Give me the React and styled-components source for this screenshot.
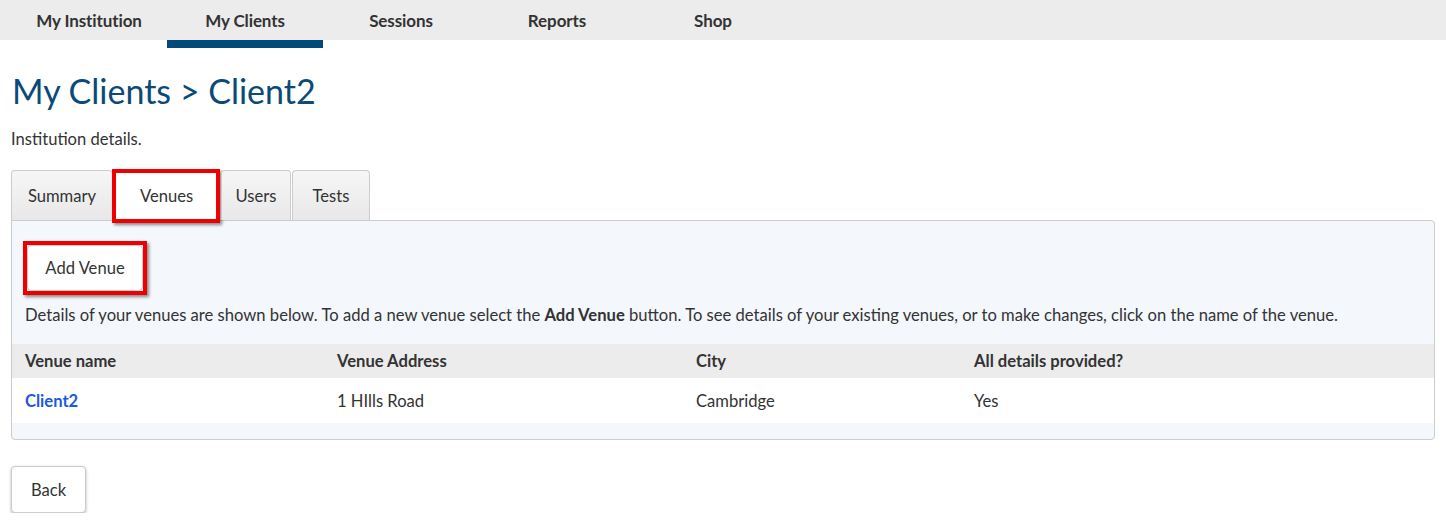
import React from 'react'
import styled, { createGlobalStyle } from 'styled-components'

const GlobalStyle = createGlobalStyle`
  body {
    margin: 0;
    font-family: Lato, "Open Sans", Arial, sans-serif;
    color: #333;
    background: #fff;
  }
`

const NavBar = styled.nav`
  display: flex;
  height: 40px;
  padding-left: 11px;
  background: #ececec;
`

const NavItem = styled.a`
  position: relative;
  width: 156px;
  display: flex;
  align-items: center;
  justify-content: center;
  font-size: 17px;
  font-weight: 700;
  letter-spacing: -0.1px;
  color: #333;
  text-decoration: none;

  ${p => p.$active && `
    &::after {
      content: '';
      position: absolute;
      left: 0;
      right: 0;
      top: 40px;
      height: 8px;
      background: #004b7a;
    }
  `}
`

const Main = styled.main`
  padding: 0 11px;
  font-size: 16.6px;
`

const Title = styled.h1`
  margin: 29px 0 0 1px;
  font-size: 34px;
  font-weight: 400;
  line-height: 44px;
  color: #0b4a78;
`

const Intro = styled.p`
  margin: 16px 0 0;
  font-size: inherit;
  line-height: 20px;
`

const Tabs = styled.div`
  display: flex;
  margin-top: 21px;
  height: 50px;
  align-items: flex-end;
`

const Tab = styled.button`
  position: relative;
  height: 50px;
  width: ${p => p.$w}px;
  margin-right: ${p => p.$gap || 0}px;
  font-family: inherit;
  font-size: inherit;
  color: #333;
  border: 1px solid #ccc;
  border-bottom: none;
  border-radius: 4px 4px 0 0;
  background: ${p => (p.$active ? '#fff' : 'linear-gradient(#f6f6f6, #e8e8e8)')};
  padding: 0;
  cursor: pointer;

  ${p => p.$highlight && `
    &::before {
      content: '';
      position: absolute;
      left: -2px;
      right: -1px;
      top: -2px;
      bottom: -3px;
      border: 4px solid #ee0000;
      box-shadow: 2px 2px 3px rgba(0,0,0,0.45);
    }
  `}
`

const Panel = styled.section`
  border: 1px solid #ccc;
  border-radius: 0 4px 4px 4px;
  background: #f4f7fb;
  padding: 20px 0 16px;
`

const Highlight = styled.div`
  display: inline-block;
  margin-left: 11px;
  border: 4px solid #ee0000;
  box-shadow: 2px 2px 3px rgba(0,0,0,0.45);
`

const Button = styled.button`
  display: block;
  font-family: inherit;
  font-size: inherit;
  color: #333;
  background: #fff;
  border: 1px solid #ccc;
  border-radius: 4px;
  padding: 0;
  height: ${p => p.$h}px;
  width: ${p => p.$w}px;
  cursor: pointer;
  ${p => p.$shadow && 'box-shadow: 0 1px 3px rgba(0,0,0,0.3);'}
`

const Help = styled.p`
  margin: 10px 13px 0;
  font-size: inherit;
  line-height: 20px;

  b { font-weight: 700; }
`

const Table = styled.table`
  width: 100%;
  margin-top: 19px;
  border-collapse: collapse;
  font-size: inherit;

  th, td {
    text-align: left;
    padding: 0 13px;
  }
  th {
    height: 34px;
    background: #ececec;
    font-weight: 700;
  }
  td {
    height: 45px;
    background: #fff;
  }
`

const Col = styled.col`
  width: ${p => p.$w}px;
`

const VenueLink = styled.a`
  color: #1a5ae0;
  font-weight: 700;
  text-decoration: none;
`

const Footer = styled.div`
  margin-top: 26px;
`

export default function App() {
  const nav = ['My Institution', 'My Clients', 'Sessions', 'Reports', 'Shop']
  return (
    <>
      <GlobalStyle />
      <NavBar>
        {nav.map(n => (
          <NavItem key={n} $active={n === 'My Clients'}>{n}</NavItem>
        ))}
      </NavBar>
      <Main>
        <Title>My Clients &gt; Client2</Title>
        <Intro>Institution details.</Intro>
        <Tabs>
          <Tab $w={102}>Summary</Tab>
          <Tab $w={107} $gap={1} $active $highlight>Venues</Tab>
          <Tab $w={70} $gap={1}>Users</Tab>
          <Tab $w={78}>Tests</Tab>
        </Tabs>
        <Panel>
          <Highlight>
            <Button $w={116} $h={46}>Add Venue</Button>
          </Highlight>
          <Help>
            Details of your venues are shown below. To add a new venue select the <b>Add Venue</b> button. To see details of your existing venues, or to make changes, click on the name of the venue.
          </Help>
          <Table>
            <colgroup>
              <Col $w={312} />
              <Col $w={359} />
              <Col $w={278} />
              <Col />
            </colgroup>
            <thead>
              <tr>
                <th>Venue name</th>
                <th>Venue Address</th>
                <th>City</th>
                <th>All details provided?</th>
              </tr>
            </thead>
            <tbody>
              <tr>
                <td><VenueLink href="#">Client2</VenueLink></td>
                <td>1 HIlls Road</td>
                <td>Cambridge</td>
                <td>Yes</td>
              </tr>
            </tbody>
          </Table>
        </Panel>
        <Footer>
          <Button $w={75} $h={47} $shadow>Back</Button>
        </Footer>
      </Main>
    </>
  )
}
